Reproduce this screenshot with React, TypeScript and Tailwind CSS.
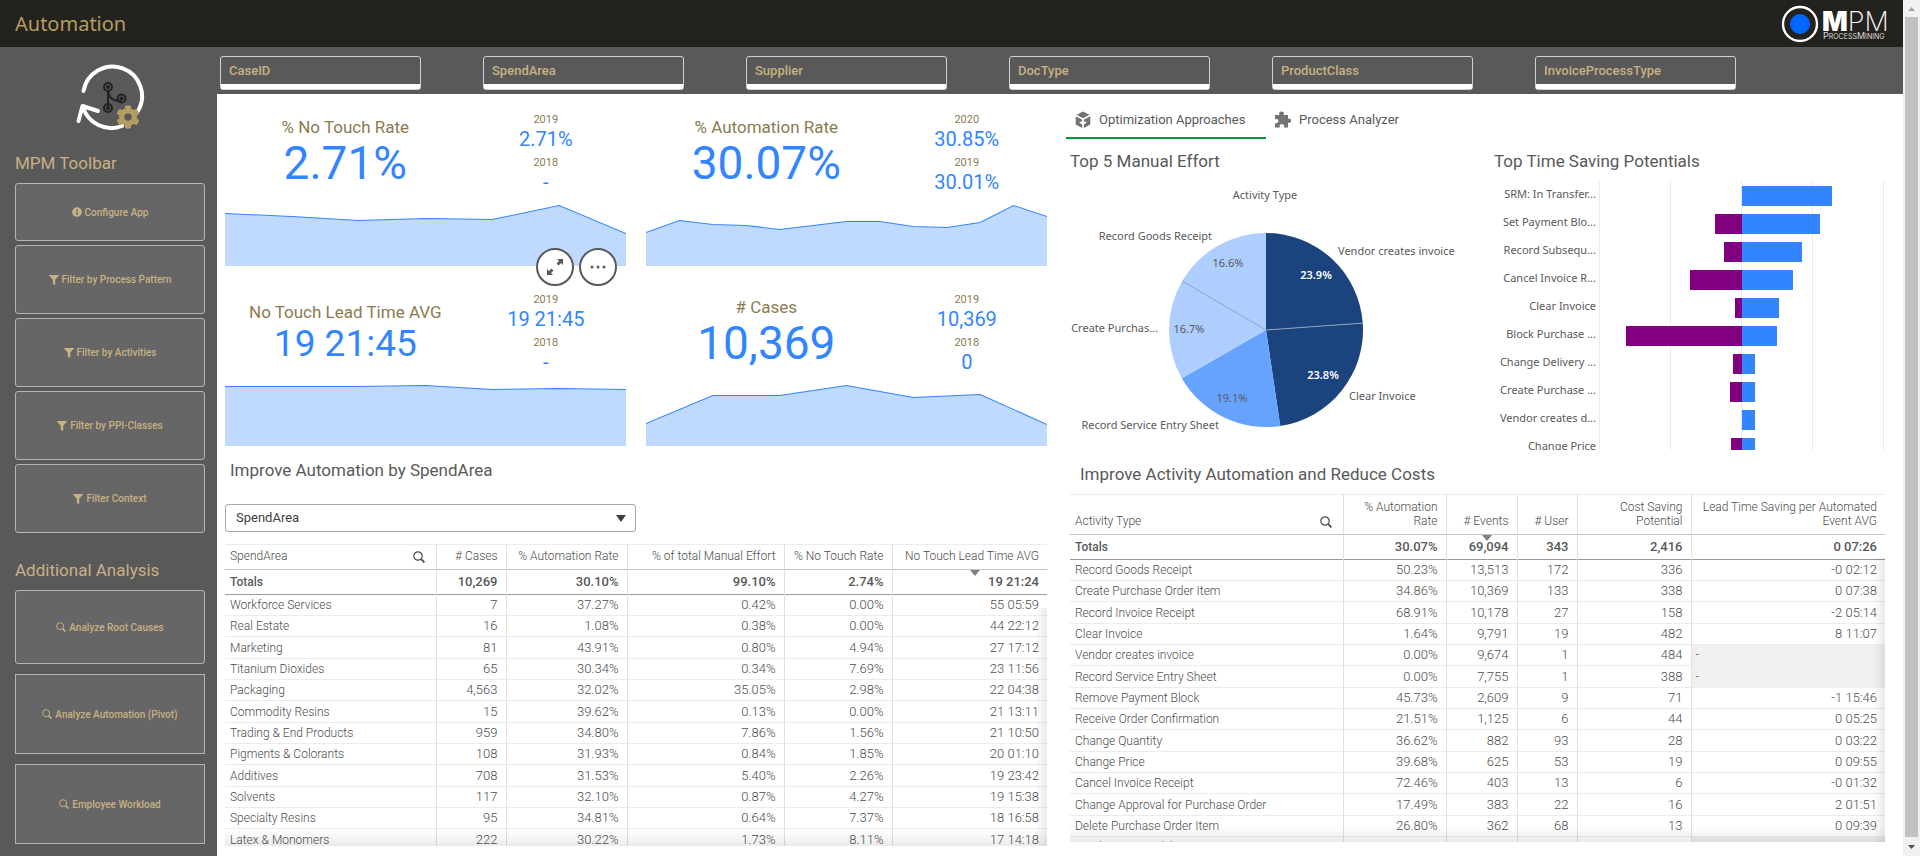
import type { ReactNode } from "react";
import { FaCog, FaFilter, FaInfoCircle } from "react-icons/fa";

const filters = ["CaseID", "SpendArea", "Supplier", "DocType", "ProductClass", "InvoiceProcessType"];

const kpis = [
  {
    title: "% No Touch Rate",
    value: "2.71%",
    history: [["2019", "2.71%"], ["2018", "-"]],
    points: [9, 12, 16, 14, 15, 1, 29],
  },
  {
    title: "% Automation Rate",
    value: "30.07%",
    history: [["2020", "30.85%"], ["2019", "30.01%"]],
    points: [28, 16, 20, 21, 25, 21, 17, 17, 22, 23, 18, 1, 12],
  },
  {
    title: "No Touch Lead Time AVG",
    value: "19 21:45",
    compact: true,
    history: [["2019", "19 21:45"], ["2018", "-"]],
    points: [2, 2, 2, 1, 5, 4, 5],
  },
  {
    title: "# Cases",
    value: "10,369",
    history: [["2019", "10,369"], ["2018", "0"]],
    points: [39, 11, 11, 1, 13, 10, 40],
  },
];

const spendAreas = [
  ["Workforce Services", "7", "37.27%", "0.42%", "0.00%", "55 05:59"],
  ["Real Estate", "16", "1.08%", "0.38%", "0.00%", "44 22:12"],
  ["Marketing", "81", "43.91%", "0.80%", "4.94%", "27 17:12"],
  ["Titanium Dioxides", "65", "30.34%", "0.34%", "7.69%", "23 11:56"],
  ["Packaging", "4,563", "32.02%", "35.05%", "2.98%", "22 04:38"],
  ["Commodity Resins", "15", "39.62%", "0.13%", "0.00%", "21 13:11"],
  ["Trading & End Products", "959", "34.80%", "7.86%", "1.56%", "21 10:50"],
  ["Pigments & Colorants", "108", "31.93%", "0.84%", "1.85%", "20 01:10"],
  ["Additives", "708", "31.53%", "5.40%", "2.26%", "19 23:42"],
  ["Solvents", "117", "32.10%", "0.87%", "4.27%", "19 15:38"],
  ["Specialty Resins", "95", "34.81%", "0.64%", "7.37%", "18 16:58"],
  ["Latex & Monomers", "222", "30.22%", "1.73%", "8.11%", "17 14:18"],
];

const activities = [
  ["Record Goods Receipt", "50.23%", "13,513", "172", "336", "-0 02:12"],
  ["Create Purchase Order Item", "34.86%", "10,369", "133", "338", "0 07:38"],
  ["Record Invoice Receipt", "68.91%", "10,178", "27", "158", "-2 05:14"],
  ["Clear Invoice", "1.64%", "9,791", "19", "482", "8 11:07"],
  ["Vendor creates invoice", "0.00%", "9,674", "1", "484", "-"],
  ["Record Service Entry Sheet", "0.00%", "7,755", "1", "388", "-"],
  ["Remove Payment Block", "45.73%", "2,609", "9", "71", "-1 15:46"],
  ["Receive Order Confirmation", "21.51%", "1,125", "6", "44", "0 05:25"],
  ["Change Quantity", "36.62%", "882", "93", "28", "0 03:22"],
  ["Change Price", "39.68%", "625", "53", "19", "0 09:55"],
  ["Cancel Invoice Receipt", "72.46%", "403", "13", "6", "-0 01:32"],
  ["Change Approval for Purchase Order", "17.49%", "383", "22", "16", "2 01:51"],
  ["Delete Purchase Order Item", "26.80%", "362", "68", "13", "0 09:39"],
  ["Vendor creates debit memo", "0.00%", "347", "1", "17", "-"],
];

const savings = [
  { label: "SRM: In Transfer...", blue: 90, purple: 0 },
  { label: "Set Payment Blo...", blue: 78, purple: 27 },
  { label: "Record Subsequ...", blue: 60, purple: 18 },
  { label: "Cancel Invoice R...", blue: 51, purple: 52 },
  { label: "Clear Invoice", blue: 37, purple: 7 },
  { label: "Block Purchase ...", blue: 35, purple: 116 },
  { label: "Change Delivery ...", blue: 13, purple: 9 },
  { label: "Create Purchase ...", blue: 13, purple: 12 },
  { label: "Vendor creates d...", blue: 13, purple: 0 },
  { label: "Change Price", blue: 13, purple: 11 },
];

function SearchIcon({ className }: { className: string }) {
  return (
    <svg viewBox="0 0 12 12" className={className} fill="none" stroke="currentColor" aria-hidden="true">
      <circle cx="5" cy="5" r="4.2" strokeWidth="1.2" />
      <path d="M8.2 8.2 11.4 11.4" strokeWidth="1.9" />
    </svg>
  );
}

function AppIcon() {
  return (
    <svg viewBox="0 0 70 68" className="h-[68px] w-[70px]" fill="none" aria-hidden="true">
      <g stroke="#fff" strokeWidth="4" strokeLinecap="round">
        <path d="M8.500 27A29.500 29.500 0 1 1 63 47" />
        <path d="M8 43A29.500 29.500 0 0 0 47 62" />
        <path d="M3.500 57 7.500 42 23 47" strokeLinejoin="round" />
      </g>
      <g stroke="#24221e" strokeWidth="2">
        <path d="M33 26v18M33 26c0 8 5 11 13 11" />
        <circle cx="33" cy="23" r="4" />
        <circle cx="46.500" cy="34.500" r="4" />
        <circle cx="33" cy="44" r="4" />
      </g>
      <g fill="#24221e">
        <circle cx="33" cy="23" r="2" />
        <circle cx="46.500" cy="34.500" r="2" />
        <circle cx="33" cy="44" r="2" />
      </g>
      <FaCog x="41" y="41" size={24} color="#b59d62" />
    </svg>
  );
}

function Logo() {
  return (
    <svg viewBox="0 0 108 38" className="h-[38px] w-[108px]" role="img" aria-label="MPM ProcessMining">
      <circle cx="19" cy="19" r="17" fill="none" stroke="#fff" strokeWidth="2.400" />
      <circle cx="19" cy="19" r="10" fill="#0066ff" />
      <text x="41" y="26" fill="#fff" fontFamily="Inter, sans-serif" fontSize="27" fontWeight="200">
        <tspan fontWeight="900">M</tspan>PM
      </text>
      <text x="42" y="34" fill="#ddd" fontFamily="Inter, sans-serif" fontSize="9">
        P<tspan fontSize="7">ROCESS</tspan>M<tspan fontSize="7">INING</tspan>
      </text>
    </svg>
  );
}

function ToolButton({ icon, className, children }: { icon: ReactNode; className: string; children: ReactNode }) {
  return (
    <button
      className={`flex w-full items-center justify-center gap-[3px] border border-[#b5b5b5] bg-[#666] text-[10px] font-medium text-[#c8b183] ${className}`}
    >
      {icon}
      {children}
    </button>
  );
}

function Sidebar() {
  const filterIcon = <FaFilter size={10} />;
  const searchIcon = <SearchIcon className="size-[10px]" />;

  return (
    <aside className="w-[217px] shrink-0 bg-[#595959] pr-3 pl-[15px]">
      <div className="flex h-[104px] justify-center pt-[17px]">
        <AppIcon />
      </div>
      <h2 className="text-[17px] leading-6 text-[#c8b183]">MPM Toolbar</h2>
      <div className="mt-2 flex flex-col gap-1">
        <ToolButton icon={<FaInfoCircle size={10} />} className="h-[58px] rounded-[3px]">Configure App</ToolButton>
        <ToolButton icon={filterIcon} className="h-[69px] rounded-[3px]">Filter by Process Pattern</ToolButton>
        <ToolButton icon={filterIcon} className="h-[69px] rounded-[3px]">Filter by Activities</ToolButton>
        <ToolButton icon={filterIcon} className="h-[69px] rounded-[3px]">Filter by PPI-Classes</ToolButton>
        <ToolButton icon={filterIcon} className="h-[69px] rounded-[3px]">Filter Context</ToolButton>
      </div>
      <h2 className="mt-[25px] text-[17px] leading-6 text-[#c8b183]">Additional Analysis</h2>
      <div className="mt-2 flex flex-col gap-[10px]">
        <ToolButton icon={searchIcon} className="h-[74px] rounded-[3px]">Analyze Root Causes</ToolButton>
        <ToolButton icon={searchIcon} className="h-[80px]">Analyze Automation (Pivot)</ToolButton>
        <ToolButton icon={searchIcon} className="h-[80px]">Employee Workload</ToolButton>
      </div>
    </aside>
  );
}

function AreaChart({ points }: { points: number[] }) {
  const step = 400 / (points.length - 1);
  const line = points.map((y, i) => `${i * step},${y + 0.5}`).join(" ");

  return (
    <svg viewBox="0 0 400 62" preserveAspectRatio="none" className="h-[62px] w-full" aria-hidden="true">
      <polygon points={`0,62 ${line} 400,62`} fill="#c0daff" />
      <polyline points={line} fill="none" stroke="#3385ff" vectorEffect="non-scaling-stroke" />
    </svg>
  );
}

function Kpi({ kpi }: { kpi: (typeof kpis)[number] }) {
  return (
    <div>
      <div className="grid h-[110px] grid-cols-[3fr_2fr] text-center">
        <div className={kpi.compact ? "pt-[26px]" : "pt-[21px]"}>
          <div className="text-[17px] leading-6 text-[#8b7b50]">{kpi.title}</div>
          <div className={kpi.compact ? "text-[37px] leading-[40px] text-[#3385ff]" : "text-[46px] leading-[48px] text-[#3385ff]"}>
            {kpi.value}
          </div>
        </div>
        <div className="flex flex-col gap-[5px] pt-[18px]">
          {kpi.history.map(([year, value]) => (
            <div key={year}>
              <div className="text-[11px] leading-4 text-[#8b7b50]">{year}</div>
              <div className="text-xl leading-[22px] text-[#3385ff]">{value}</div>
            </div>
          ))}
        </div>
      </div>
      <AreaChart points={kpi.points} />
    </div>
  );
}

function SortMarker() {
  return (
    <svg viewBox="0 0 10 6" className="absolute top-0 left-1/2 h-[6px] w-[10px]" aria-hidden="true">
      <path d="M0 0h10L5 6z" fill="#808080" />
    </svg>
  );
}

type DataTableProps = {
  columns: string[];
  cols: string[];
  totals: string[];
  rows: string[][];
  sortedBy: number;
  headClass: string;
};

function DataTable({ columns, cols, totals, rows, sortedBy, headClass }: DataTableProps) {
  return (
    <div className="relative min-h-0 flex-1 overflow-hidden">
      <table className="w-full table-fixed border-collapse text-[13px] font-light text-[#4d4d4d]">
        <colgroup>
          {cols.map((c, i) => (
            <col key={i} className={c} />
          ))}
        </colgroup>
        <thead>
          <tr className={`border-t border-b border-t-[#ececec] border-b-[#c4c4c4] text-xs ${headClass}`}>
            {columns.map((name, i) => (
              <th
                key={name}
                scope="col"
                className={`pb-1.5 align-bottom leading-[14px] font-light ${i === 0 ? "px-[5px] text-left" : "border-l border-[#e0e0e0] pl-1 pr-2 text-right"}`}
              >
                {i === 0 ? (
                  <span className="flex items-end justify-between pr-1.5">
                    {name}
                    <button aria-label={`Search ${name}`}>
                      <SearchIcon className="size-3" />
                    </button>
                  </span>
                ) : (
                  name
                )}
              </th>
            ))}
          </tr>
          <tr className="h-[25px] border-b border-[#999] text-[#595959]">
            {totals.map((value, i) => (
              <td
                key={i}
                className={`relative font-medium ${i === 0 ? "px-[5px] text-xs" : "border-l border-[#e0e0e0] pr-2 text-right"}`}
              >
                {i === sortedBy && <SortMarker />}
                {value}
              </td>
            ))}
          </tr>
        </thead>
        <tbody>
          {rows.map((row) => (
            <tr key={row[0]} className="h-[21px] border-b border-[#ececec] nth-[3n]:h-[22px]">
              {row.map((value, i) => (
                <td
                  key={i}
                  className={`truncate leading-4 ${i === 0 ? "px-[5px] text-xs" : "border-l border-[#e0e0e0]"} ${value === "-" ? "bg-[#f0f0f0] pl-1" : i === 0 ? "" : "pr-2 text-right"}`}
                >
                  {value}
                </td>
              ))}
            </tr>
          ))}
        </tbody>
      </table>
      {/* scroll shadows */}
      <div className="pointer-events-none absolute inset-x-0 bottom-0 h-4 bg-linear-to-t from-black/8 to-transparent" />
      <div className="pointer-events-none absolute top-16 right-0 bottom-0 w-3 bg-linear-to-l from-black/8 to-transparent" />
    </div>
  );
}

const slices = [
  { share: 23.9, color: "#1b437e" },
  { share: 23.8, color: "#1b437e" },
  { share: 19.1, color: "#66a3ff" },
  { share: 16.7, color: "#adceff" },
  { share: 16.6, color: "#adceff" },
];

const CX = 196;
const CY = 157;
const R = 97;

function rim(share: number) {
  const angle = (share / 100.1) * Math.PI * 2;
  return `${CX + R * Math.sin(angle)} ${CY - R * Math.cos(angle)}`;
}

function PieChart() {
  let start = 0;
  return (
    <svg
      viewBox="0 0 400 278"
      className="h-[278px] w-[400px]"
      fontFamily="'Noto Sans', sans-serif"
      fontSize="11"
      fill="#595959"
      role="img"
      aria-label="Top 5 Manual Effort"
    >
      {slices.map(({ share, color }, i) => {
        const from = start;
        start += share;
        return <path key={i} d={`M${CX} ${CY}L${rim(from)}A${R} ${R} 0 0 1 ${rim(start)}Z`} fill={color} />;
      })}
      <path d={`M${CX} ${CY}L${rim(23.9)}M${CX} ${CY}L${rim(83.5)}`} stroke="#8fa3bd" />
      <g textAnchor="middle">
        <text x="195" y="26">Activity Type</text>
        <text x="246" y="106" fill="#fff" fontWeight="600">23.9%</text>
        <text x="253" y="206" fill="#fff" fontWeight="600">23.8%</text>
        <text x="162" y="229">19.1%</text>
        <text x="119" y="160">16.7%</text>
        <text x="158" y="94">16.6%</text>
      </g>
      <text x="268" y="82">Vendor creates invoice</text>
      <text x="279" y="227">Clear Invoice</text>
      <g textAnchor="end">
        <text x="142" y="67">Record Goods Receipt</text>
        <text x="88" y="159">Create Purchas...</text>
        <text x="149" y="256">Record Service Entry Sheet</text>
      </g>
    </svg>
  );
}

function BarChart() {
  return (
    <svg
      viewBox="0 0 391 269"
      className="mt-2 h-[269px] w-[391px]"
      fontFamily="'Noto Sans', sans-serif"
      fontSize="11"
      fill="#595959"
      role="img"
      aria-label="Top Time Saving Potentials"
    >
      <path d="M105.500 0v269M176.500 0v269M247.500 0v269M318.500 0v269M389.500 0v269" stroke="#ebebeb" />
      {savings.map(({ label, blue, purple }, i) => (
        <g key={label}>
          <text x="102" y={17 + i * 28} textAnchor="end">{label}</text>
          <rect x={248 - purple} y={5 + i * 28} width={purple} height="20" fill="#800080" />
          <rect x="248" y={5 + i * 28} width={blue} height="20" fill="#3385ff" />
        </g>
      ))}
    </svg>
  );
}

function Tabs() {
  return (
    <div className="-ml-1 flex h-[39px] text-[13px] text-[#595959]">
      <button className="flex w-[200px] items-center gap-2 border-b-2 border-[#009845] pt-0.5 pl-[9px]">
        <svg viewBox="0 0 16 18" className="h-[18px] w-4" fill="#737373" aria-hidden="true">
          <path d="M8 .5 14.500 3.800 8 7.200 1.500 3.800zM.7 5.200 7.200 8.700V10L4 11.500 7.200 13.500V17L.7 13.500zM15.300 5.200 8.800 8.700V10L12 11.500 8.800 13.500V17L15.300 13.500z" />
        </svg>
        Optimization Approaches
      </button>
      <button className="flex items-center gap-2 border-b-2 border-transparent pt-0.5 pl-2">
        <svg viewBox="0 0 17 17" className="size-[17px]" fill="#737373" aria-hidden="true">
          <path d="M1 4h4.500C4.500 1.500 5.500.5 7.500.5S10.500 1.500 9.500 4H14v4c1.500-1 3 0 3 1.800s-1.500 2.700-3 1.700V16.500H10c.8-2-.5-3.500-2.200-3.500S5 14.500 5.800 16.500H1V12c2 .8 3.500-.5 3.500-2S3 7.400 1 8.200z" />
        </svg>
        Process Analyzer
      </button>
    </div>
  );
}

function Scrollbar() {
  return (
    <div className="flex w-[17px] shrink-0 flex-col items-center bg-[#f1f1f1]" aria-hidden="true">
      <svg viewBox="0 0 17 17" className="size-[17px]">
        <path d="M5 11h7L8.500 7z" fill="#a3a3a3" />
      </svg>
      <div className="w-[13px] flex-1 bg-[#c1c1c1]" />
      <svg viewBox="0 0 17 17" className="h-[19px] w-[17px]">
        <path d="M5 7h7l-3.500 4z" fill="#505050" />
      </svg>
    </div>
  );
}

export default function App() {
  return (
    <div className="flex h-screen bg-white font-[Roboto,sans-serif]">
      <div className="flex min-w-0 flex-1 flex-col">
        <header className="flex h-[47px] shrink-0 items-center justify-between bg-[#24221e] pr-3.5 pl-[15px]">
          <h1 className="font-['Noto_Sans',sans-serif] text-xl text-[#b59d62]">Automation</h1>
          <Logo />
        </header>

        <div className="flex min-h-0 flex-1">
          <Sidebar />

          <main className="flex min-w-0 flex-1 flex-col">
            <div className="grid h-[47px] shrink-0 grid-cols-6 items-center bg-[#595959] pt-[5px] pr-[105px] pl-[3px]">
              {filters.map((name) => (
                <button
                  key={name}
                  className="flex h-[34px] w-[201px] flex-col rounded-[3px] border border-[#d0d0d0] text-left text-[13px] font-medium text-[#c8b183]"
                >
                  <span className="flex flex-1 items-center pl-2">{name}</span>
                  <span className="h-[5px] w-full bg-white" />
                </button>
              ))}
            </div>

            <div className="grid min-h-0 flex-1 grid-cols-2 gap-4 pr-[18px] pl-2">
              <section className="flex min-h-0 flex-col pb-[10px]">
                <div className="relative grid grid-cols-2 gap-x-5 gap-y-2">
                  {kpis.map((kpi) => (
                    <Kpi key={kpi.title} kpi={kpi} />
                  ))}
                  {/* hover actions of the first tile */}
                  <div className="absolute top-[154px] left-[311px] flex gap-[5px] text-[#595959]">
                    <button
                      aria-label="Expand"
                      className="flex size-[38px] items-center justify-center rounded-full border-2 border-[#595959] bg-white"
                    >
                      <svg viewBox="0 0 16 16" className="size-4" fill="currentColor">
                        <path d="M10 0h6v6l-2-2-2.500 2.500-2-2L12 2zM6 16H0v-6l2 2 2.500-2.500 2 2L4 14z" />
                      </svg>
                    </button>
                    <button
                      aria-label="More"
                      className="flex size-[38px] items-center justify-center rounded-full border-2 border-[#595959] bg-white"
                    >
                      <svg viewBox="0 0 16 4" className="h-1 w-4" fill="currentColor">
                        <circle cx="2" cy="2" r="1.500" />
                        <circle cx="8" cy="2" r="1.500" />
                        <circle cx="14" cy="2" r="1.500" />
                      </svg>
                    </button>
                  </div>
                </div>

                <h2 className="mt-3 pl-[5px] text-[17px] leading-6 text-[#595959]">Improve Automation by SpendArea</h2>
                <div className="relative mt-[22px] mb-3 w-1/2 shrink-0">
                  <select
                    aria-label="Dimension"
                    className="block h-7 w-full appearance-none rounded-[3px] border border-[#a6a6a6] bg-white pl-[10px] text-[13px] text-[#404040]"
                  >
                    <option>SpendArea</option>
                  </select>
                  <svg viewBox="0 0 10 7" className="pointer-events-none absolute top-[11px] right-[10px] h-[7px] w-[10px]">
                    <path d="M0 0h10L5 7z" fill="#404040" />
                  </svg>
                </div>
                <DataTable
                  columns={["SpendArea", "# Cases", "% Automation Rate", "% of total Manual Effort", "% No Touch Rate", "No Touch Lead Time AVG"]}
                  cols={["w-[211px]", "w-[70px]", "w-[121px]", "w-[157px]", "w-[108px]", "w-[155px]"]}
                  totals={["Totals", "10,269", "30.10%", "99.10%", "2.74%", "19 21:24"]}
                  rows={spendAreas}
                  sortedBy={5}
                  headClass="h-[25px]"
                />
              </section>

              <section className="flex min-h-0 flex-col pt-1.5 pb-[14px] pl-[7px]">
                <Tabs />
                <div className="mt-[10px] flex justify-between">
                  <div>
                    <h2 className="text-[17px] leading-6 text-[#595959]">Top 5 Manual Effort</h2>
                    <PieChart />
                  </div>
                  <div>
                    <h2 className="text-[17px] leading-6 text-[#595959]">Top Time Saving Potentials</h2>
                    <BarChart />
                  </div>
                </div>
                <h2 className="mt-[11px] mb-2 pl-[10px] text-[17px] leading-6 text-[#595959]">
                  Improve Activity Automation and Reduce Costs
                </h2>
                <DataTable
                  columns={["Activity Type", "% Automation Rate", "# Events", "# User", "Cost Saving Potential", "Lead Time Saving per Automated Event AVG"]}
                  cols={["w-[273px]", "w-[103px]", "w-[71px]", "w-[60px]", "w-[114px]", "w-[194px]"]}
                  totals={["Totals", "30.07%", "69,094", "343", "2,416", "0 07:26"]}
                  rows={activities}
                  sortedBy={2}
                  headClass="h-[40px]"
                />
              </section>
            </div>
          </main>
        </div>
      </div>
      <Scrollbar />
    </div>
  );
}
